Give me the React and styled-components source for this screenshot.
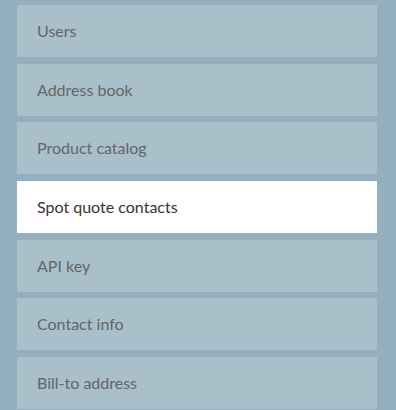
import React from "react";
import styled, { createGlobalStyle } from "styled-components";

// Settings side menu: a stack of tiles, the current one in white

const GlobalStyle = createGlobalStyle`
  html, body {
    margin: 0;
    padding: 0;
    background-color: #94afbd;
  }
`;

const Menu = styled.nav`
  display: flex;
  flex-direction: column;
  gap: 6.67px;
  width: 360px;
  padding: 5px 0 0 17px;
  height: 405px;
  overflow: hidden;
  font-family: "Lato", "Open Sans", sans-serif;
`;

const Item = styled.a`
  display: flex;
  align-items: center;
  flex-shrink: 0;
  height: 52px;
  padding-left: 20px;
  padding-bottom: 1px;
  box-sizing: border-box;
  background-color: ${(p) => (p.$active ? "#ffffff" : "#a9bfc9")};
  color: ${(p) => (p.$active ? "#3a3230" : "#636668")};
  font-size: 16px;
  text-decoration: none;
  cursor: pointer;
`;

const items = [
  "Users",
  "Address book",
  "Product catalog",
  "Spot quote contacts",
  "API key",
  "Contact info",
  "Bill-to address"
];

function App() {
  return (
    <>
      <GlobalStyle />
      <Menu>
        {items.map((label) => (
          <Item key={label} $active={label === "Spot quote contacts"}>
            {label}
          </Item>
        ))}
      </Menu>
    </>
  );
}

export default App;
